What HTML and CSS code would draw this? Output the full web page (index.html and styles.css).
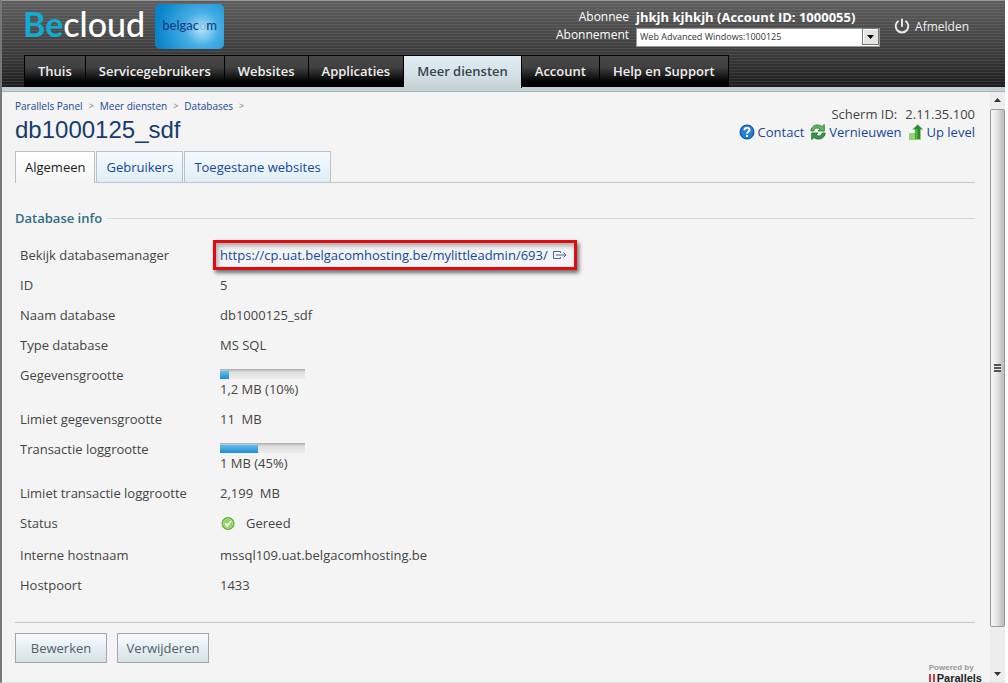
FILE: index.html
```html
<!DOCTYPE html>
<html lang="nl">
<head>
<meta charset="utf-8">
<title>db1000125_sdf - Parallels Panel</title>
<link rel="stylesheet" href="styles.css">
</head>
<body>
<div class="frame">
  <header class="top">
    <div class="brand">
      <div class="logo"><span class="logo-accent">Be</span>cloud</div>
      <div class="logo-badge">belgac<span class="logo-glow">o</span>m</div>
    </div>
    <div class="session">
      <span class="session-label">Abonnee</span>
      <strong class="session-name">jhkjh kjhkjh (Account ID: 1000055)</strong>
      <label class="session-label" for="subscription">Abonnement</label>
      <div class="picker">
        <select id="subscription"><option>Web Advanced Windows:1000125</option></select>
        <svg class="picker-arrow" viewBox="0 0 17 17" aria-hidden="true"><rect x=".5" y=".5" width="16" height="16" fill="#e4e4e2" stroke="#777"/><path d="M1.500 15.500V1.500h14" fill="none" stroke="#fff"/><path d="M5 7h7L8.500 11z" fill="#000"/></svg>
      </div>
    </div>
    <a class="logout" href="#"><svg width="16" height="16" viewBox="0 0 16 16" aria-hidden="true"><path d="M4.600 2.800a6.300 6.300 0 1 0 6.800 0M8 .8v8" fill="none" stroke="#e8e8e8" stroke-width="2"/></svg>Afmelden</a>
    <nav class="menu">
      <a href="#">Thuis</a>
      <a href="#">Servicegebruikers</a>
      <a href="#">Websites</a>
      <a href="#">Applicaties</a>
      <a class="active" href="#">Meer diensten</a>
      <a href="#">Account</a>
      <a href="#">Help en Support</a>
    </nav>
  </header>
  <div class="body">
    <main class="content">
      <div class="heading">
        <div>
          <nav class="crumbs"><a href="#">Parallels Panel</a><span>&gt;</span><a href="#">Meer diensten</a><span>&gt;</span><a href="#">Databases</a><span>&gt;</span></nav>
          <h1>db1000125_sdf</h1>
        </div>
        <div class="tools">
          <div class="screen-id"><span>Scherm ID:</span><span>2.11.35.100</span></div>
          <div class="tool-links">
            <a href="#"><svg width="16" height="16" viewBox="0 0 16 16" aria-hidden="true"><circle cx="8" cy="8" r="7.500" fill="#0d56b0"/><circle cx="8" cy="8" r="6.300" fill="#2480d8"/><path d="M5.500 6.200C5.500 2.800 10.700 3 10.500 6c-.1 1.600-2.500 1.700-2.500 3.700M8 11v2" fill="none" stroke="#fff" stroke-width="2"/></svg>Contact</a>
            <a href="#"><svg width="16" height="16" viewBox="0 0 16 16" aria-hidden="true"><path d="M.8 7C1.200 1.200 8-.8 12 2.500L14.300.5V7H8l2-2C7.500 3.200 4.200 4 3.800 7z" fill="#62b55c" stroke="#20793a" stroke-width=".8"/><path d="M15.200 9c-.4 5.800-7.200 7.800-11.200 4.500L1.700 15.500V9H8l-2 2c2.500 1.800 5.800 1 6.200-2z" fill="#37964a" stroke="#176c2c" stroke-width=".8"/></svg>Vernieuwen</a>
            <a href="#"><svg width="16" height="16" viewBox="0 0 16 16" aria-hidden="true"><path d="M4.500 5.500L9.800.5l5.200 5h-2.500v10H1.500v-6H7v-4z" fill="#278d29" stroke="#9ccb92" stroke-width=".7"/><path d="M2 10h5v5H2z" fill="#8ad862"/><path d="M7.500 5h2V15h-2z" fill="#55b545"/></svg>Up level</a>
          </div>
        </div>
      </div>
      <nav class="tabs">
        <a class="current" href="#">Algemeen</a>
        <a href="#">Gebruikers</a>
        <a href="#">Toegestane websites</a>
      </nav>
      <section>
        <h2>Database info</h2>
        <dl class="info">
          <dt>Bekijk databasemanager</dt>
          <dd><a class="marked" href="#">https://cp.uat.belgacomhosting.be/mylittleadmin/693/<svg width="14" height="10" viewBox="0 0 14 10" aria-hidden="true"><path d="M7.500 3V1.500h-7v7h7V7M3 5h10M10.500 2.500L13 5l-2.500 2.500" fill="none" stroke="#4a66a0"/></svg></a></dd>
          <dt>ID</dt><dd>5</dd>
          <dt>Naam database</dt><dd>db1000125_sdf</dd>
          <dt>Type database</dt><dd>MS SQL</dd>
          <dt>Gegevensgrootte</dt>
          <dd><div class="meter"><div class="meter-fill" style="width:10%"></div></div>1,2 MB (10%)</dd>
          <dt>Limiet gegevensgrootte</dt><dd>11&nbsp; MB</dd>
          <dt>Transactie loggrootte</dt>
          <dd><div class="meter"><div class="meter-fill" style="width:45%"></div></div>1 MB (45%)</dd>
          <dt>Limiet transactie loggrootte</dt><dd>2,199&nbsp; MB</dd>
          <dt>Status</dt>
          <dd class="status"><svg width="16" height="16" viewBox="0 0 16 16" aria-hidden="true"><circle cx="8" cy="8.500" r="6.500" fill="#59ad2c"/><circle cx="8" cy="8.500" r="4.800" fill="#8bd359" stroke="#c5eaa8" stroke-width=".8"/><path d="M5 8.300l2.300 2.500L11 6" fill="none" stroke="#fff" stroke-width="2"/></svg>Gereed</dd>
          <dt>Interne hostnaam</dt><dd>mssql109.uat.belgacomhosting.be</dd>
          <dt>Hostpoort</dt><dd>1433</dd>
        </dl>
      </section>
      <div class="actions">
        <button type="button">Bewerken</button>
        <button type="button">Verwijderen</button>
      </div>
      <footer class="powered">
        <div class="powered-by">Powered by</div>
        <div class="parallels"><span class="bars"></span>Parallels</div>
      </footer>
    </main>
    <div class="scroll" aria-hidden="true">
      <svg width="15" height="17" viewBox="0 0 15 17"><path d="M4 10h7L7.500 6z" fill="#333"/></svg>
      <div class="thumb"><span class="grip"></span></div>
      <svg width="15" height="17" viewBox="0 0 15 17"><path d="M4 7h7l-3.500 4z" fill="#333"/></svg>
    </div>
  </div>
</div>
</body>
</html>
```
FILE: styles.css
```css
* { box-sizing: border-box; }
body {
  margin: 0;
  background: #fff;
  color: #444;
  font: 13px/16px "Open Sans", "Noto Sans", sans-serif;
}
a { color: #15489b; text-decoration: none; }
.frame {
  height: 100vh;
  display: flex;
  flex-direction: column;
  margin-right: 3px;
  border-top: 1px solid #999;
  border-left: 2px solid #777;
  border-bottom: 1px solid #ddd;
  background: #f4f4f4;
  overflow: hidden;
}

.top {
  display: grid;
  grid-template-columns: 1fr auto auto;
  grid-template-rows: 54px 32px;
  border-bottom: 4px solid #c5d0d2;
  background:
    repeating-linear-gradient(transparent 0 2px, rgba(255, 255, 255, .09) 2px 3px),
    linear-gradient(#5e5e5e, #3c3c3c 60%, #1d1d1d);
  color: #fff;
  flex: none;
}
.brand { display: flex; gap: 10px; padding: 3px 0 0 21px; }
.logo { font: 500 34px/40px Lato, sans-serif; }
.logo-accent { color: #12abd2; font-weight: 700; }
.logo-badge {
  width: 69px;
  height: 45px;
  border-radius: 5px;
  background: radial-gradient(circle at 68% 56%, #b5e4fa 0, #45aee5 32%, #0984cb 85%);
  color: #123f83;
  font: 500 13px/43px Lato, sans-serif;
  text-align: center;
}
.logo-glow { color: #8fb9dd; }
.session {
  display: grid;
  grid-template-columns: auto 244px;
  grid-template-rows: 18px 20px;
  column-gap: 7px;
  padding-top: 7px;
  font-size: 12px;
  line-height: 18px;
}
.session-label { text-align: right; }
.session-name { font-size: 13px; font-weight: 700; }
.picker { position: relative; padding-top: 1px; }
.picker select {
  appearance: none;
  width: 100%;
  height: 19px;
  padding: 0 20px 0 3px;
  border: 1px solid #999;
  border-radius: 0;
  background: #fff;
  color: #333;
  font: 9px/16px "Open Sans", sans-serif;
}
.picker-arrow {
  position: absolute;
  top: 2px;
  right: 1px;
  width: 17px;
  height: 17px;
  pointer-events: none;
}
.logout {
  display: flex;
  gap: 5px;
  padding: 17px 36px 0 14px;
  color: #eee;
  font-size: 12px;
  line-height: 18px;
}
.menu {
  grid-column: 1 / -1;
  justify-self: start;
  display: flex;
  margin-left: 22px;
}
.menu a {
  padding: 0 13px;
  border-top: 1px solid #000;
  border-right: 1px solid #000;
  background: linear-gradient(#484848, #414141 35%, #000 85%);
  color: #eee;
  font-weight: 600;
  font-size: 13px;
  line-height: 31px;
}
.menu a:first-child { border-left: 1px solid #000; }
.menu .active {
  margin-bottom: -1px;
  background: linear-gradient(#e2edf4, #d3e1e7 60%, #c5d0d2);
  color: #36454f;
}

.body {
  flex: 1;
  min-height: 0;
  display: flex;
  border-top: 1px solid #9fb6bd;
}
.content { flex: 1; padding: 5px 13px 0; min-width: 0; }
.heading { display: flex; justify-content: space-between; margin-right: 2px; }
.crumbs { display: flex; gap: 6px; font-size: 10px; line-height: 18px; }
.crumbs span { color: #777; font-size: 9px; }
h1 {
  margin: 0;
  color: #163c70;
  font: 24px/30px "Liberation Sans", Arial, sans-serif;
}
.tools { padding-top: 8px; line-height: 18px; }
.screen-id { display: flex; justify-content: flex-end; gap: 8px; }
.tool-links { display: flex; gap: 6px; }
.tool-links a { display: flex; align-items: center; gap: 3px; }
.tabs {
  display: flex;
  gap: 1px;
  margin: 6px 2px 0 0;
  border-bottom: 1px solid #bfc6c9;
}
.tabs a {
  padding: 0 9px;
  border: 1px solid #b8c3c8;
  border-bottom: 0;
  background: linear-gradient(#f6fbff, #dfedf5);
  line-height: 30px;
}
.tabs .current {
  margin-bottom: -1px;
  background: linear-gradient(#fff, #f4f4f4);
  color: #222;
}
h2 {
  display: flex;
  align-items: center;
  gap: 5px;
  margin: 26px 2px 13px 0;
  color: #2e6c85;
  font-size: 13px;
  font-weight: 600;
  line-height: 18px;
}
h2::after { content: ""; flex: 1; height: 1px; background: #d6d6d6; }
.info {
  display: grid;
  grid-template-columns: 200px 1fr;
  margin: 0 0 0 5px;
}
.info dt, .info dd { margin: 0; padding: 7px 0; }
.marked {
  display: inline-flex;
  align-items: center;
  gap: 5px;
  margin: -7px;
  padding: 4px 7px 4px 4px;
  border: 3px solid #e10b10;
  box-shadow: 2px 3px 4px rgba(0, 0, 0, .55), inset 2px 3px 4px rgba(0, 0, 0, .3);
}
.meter {
  width: 85px;
  height: 10px;
  margin: 2px 0;
  padding-top: 2px;
  background: linear-gradient(#aaa, #ddd 30%, #eee);
}
.meter-fill { height: 8px; background: linear-gradient(#5cc0f2, #258bd2); }
.info .status { display: flex; gap: 10px; padding-bottom: 9px; }
.actions {
  display: flex;
  gap: 10px;
  margin: 22px 2px 0 0;
  padding-top: 10px;
  border-top: 1px solid #bfc3c5;
}
.actions button {
  width: 92px;
  height: 30px;
  padding: 0;
  border: 1px solid #9da8ac;
  background: linear-gradient(#f7fcff, #d7e2e4);
  color: #52606a;
  font: 13px/18px "Open Sans", sans-serif;
}
.powered {
  width: max-content;
  margin-left: auto;
  font-family: "Liberation Sans", Arial, sans-serif;
  font-weight: 700;
  margin-right: -5px;
}
.powered-by { color: #999; font-size: 8px; line-height: 9px; }
.parallels { display: flex; align-items: center; gap: 2px; color: #222; font-size: 11px; line-height: 13px; }
.bars { width: 6px; height: 10px; border: solid #d33a42; border-width: 0 2px; }
.scroll {
  width: 15px;
  display: flex;
  flex-direction: column;
  background: #ededed;
}
.scroll svg { flex: none; }
.thumb {
  flex: 1;
  display: flex;
  align-items: center;
  justify-content: center;
  margin-bottom: 38px;
  border: 1px solid #999;
  border-radius: 2px;
  background: linear-gradient(90deg, #f6f6f6, #e8e8e8 40%, #bbb);
}
.grip { width: 7px; height: 8px; background: repeating-linear-gradient(#555 0 2px, #eee 2px 3px); }
```
